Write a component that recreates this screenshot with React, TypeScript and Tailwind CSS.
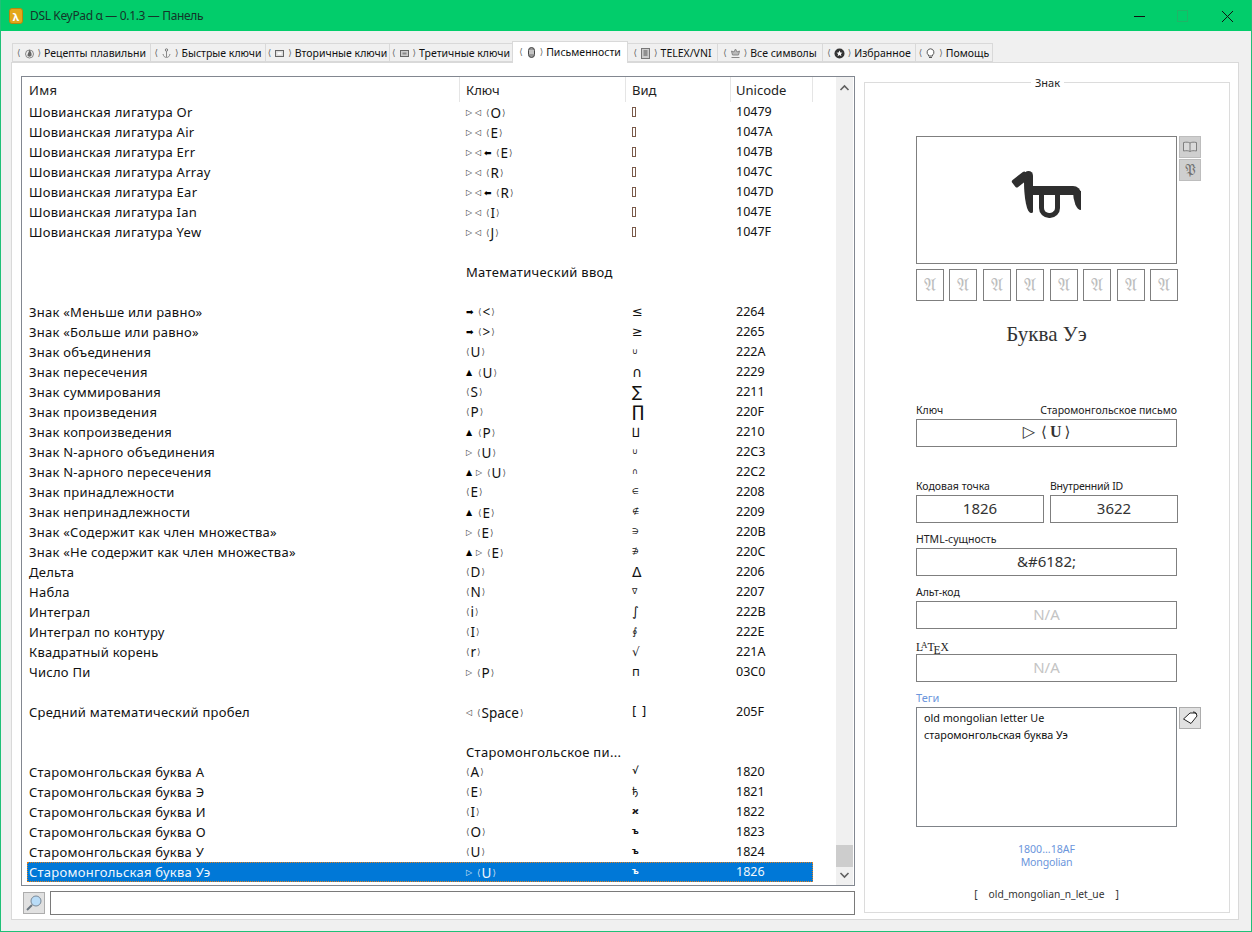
import React from "react";

const F = "font-['Noto_Sans',sans-serif]";
type Row = { n?: string; m?: string; k?: string; v?: React.ReactNode; u?: string; h?: string };
const Tofu = () => <span className="inline-block w-[4px] h-[10px] border border-[#7a5a4a] align-[-1px]" />;
const G = ({ c, s }: { c: string; s: string }) => <span className={s}>{c}</span>;

const tf = <Tofu />;
const rows: Row[] = [
  { n: "Шовианская лигатура Or", m: "rl", k: "O", v: tf, u: "10479" },
  { n: "Шовианская лигатура Air", m: "rl", k: "E", v: tf, u: "1047A" },
  { n: "Шовианская лигатура Err", m: "rlL", k: "E", v: tf, u: "1047B" },
  { n: "Шовианская лигатура Array", m: "rl", k: "R", v: tf, u: "1047C" },
  { n: "Шовианская лигатура Ear", m: "rlL", k: "R", v: tf, u: "1047D" },
  { n: "Шовианская лигатура Ian", m: "rl", k: "I", v: tf, u: "1047E" },
  { n: "Шовианская лигатура Yew", m: "rl", k: "J", v: tf, u: "1047F" },
  {},
  { h: "Математический ввод" },
  {},
  { n: "Знак «Меньше или равно»", m: "R", k: "<", v: <G c="≤" s="text-[13px]" />, u: "2264" },
  { n: "Знак «Больше или равно»", m: "R", k: ">", v: <G c="≥" s="text-[13px]" />, u: "2265" },
  { n: "Знак объединения", k: "U", v: <G c="∪" s="text-[8px]" />, u: "222A" },
  { n: "Знак пересечения", m: "u", k: "U", v: <G c="∩" s="text-[14px]" />, u: "2229" },
  { n: "Знак суммирования", k: "S", v: <G c="∑" s="text-[15px]" />, u: "2211" },
  { n: "Знак произведения", k: "P", v: <G c="∏" s="text-[16px]" />, u: "220F" },
  { n: "Знак копроизведения", m: "u", k: "P", v: <G c="∐" s="text-[10px]" />, u: "2210" },
  { n: "Знак N-арного объединения", m: "r", k: "U", v: <G c="∪" s="text-[8px]" />, u: "22C3" },
  { n: "Знак N-арного пересечения", m: "ur", k: "U", v: <G c="∩" s="text-[8px]" />, u: "22C2" },
  { n: "Знак принадлежности", k: "E", v: <G c="∈" s="text-[8px]" />, u: "2208" },
  { n: "Знак непринадлежности", m: "u", k: "E", v: <G c="∉" s="text-[8px]" />, u: "2209" },
  { n: "Знак «Содержит как член множества»", m: "r", k: "E", v: <G c="∋" s="text-[8px]" />, u: "220B" },
  { n: "Знак «Не содержит как член множества»", m: "ur", k: "E", v: <G c="∌" s="text-[8px]" />, u: "220C" },
  { n: "Дельта", k: "D", v: <G c="Δ" s="text-[14px]" />, u: "2206" },
  { n: "Набла", k: "N", v: <G c="∇" s="text-[8px]" />, u: "2207" },
  { n: "Интеграл", k: "i", v: <G c="∫" s="text-[13px]" />, u: "222B" },
  { n: "Интеграл по контуру", k: "I", v: <G c="∮" s="text-[10px]" />, u: "222E" },
  { n: "Квадратный корень", k: "r", v: <G c="√" s="text-[12px]" />, u: "221A" },
  { n: "Число Пи", m: "r", k: "P", v: <G c="п" s="text-[12px]" />, u: "03C0" },
  {},
  { n: "Средний математический пробел", m: "l", k: "Space", v: <G c="[ ]" s="text-[13px]" />, u: "205F" },
  {},
  { h: "Старомонгольское пи..." },
  { n: "Старомонгольская буква А", k: "A", v: <G c="√" s="text-[10px] font-bold -mt-[3px]" />, u: "1820" },
  { n: "Старомонгольская буква Э", k: "E", v: <G c="ђ" s="text-[10px]" />, u: "1821" },
  { n: "Старомонгольская буква И", k: "I", v: <G c="ϰ" s="text-[9px] font-bold -mt-[2px]" />, u: "1822" },
  { n: "Старомонгольская буква О", k: "O", v: <G c="ъ" s="text-[9px] font-bold -mt-[2px]" />, u: "1823" },
  { n: "Старомонгольская буква У", k: "U", v: <G c="ъ" s="text-[9px] font-bold -mt-[2px]" />, u: "1824" },
  { n: "Старомонгольская буква Уэ", m: "r", k: "U", v: <G c="ъ" s="text-[9px] font-bold -mt-[2px]" />, u: "1826" },
];

function Mod({ c, sel }: { c: string; sel?: boolean }) {
  const tone = sel ? "text-[#dfe9f5]" : "text-[#333]";
  const solid = sel ? "text-[#fff]" : "text-[#000]";
  if (c === "r") return <span className={`text-[8px] w-[8px] ${tone}`}>▷</span>;
  if (c === "l") return <span className={`text-[8px] w-[8px] ${tone}`}>◁</span>;
  if (c === "L") return <span className={`text-[9px] w-[9px] font-bold ${solid}`}>⬅</span>;
  if (c === "R") return <span className={`text-[9px] w-[9px] font-bold ${solid}`}>➡</span>;
  return <span className={`text-[8px] w-[9px] ${solid}`}>▲</span>;
}

function Key({ m, k, sel }: { m?: string; k?: string; sel?: boolean }) {
  if (!k) return null;
  const br = `font-['DejaVu_Sans',sans-serif] text-[9px] ${sel ? "text-[#cfe0f3]" : "text-[#555]"}`;
  return (
    <span className="inline-flex items-center">
      {m && (
        <span className="inline-flex items-center font-['DejaVu_Sans',sans-serif] gap-[1px] mr-[3px]">
          {m.split("").map((c, i) => (
            <Mod key={i} c={c} sel={sel} />
          ))}
        </span>
      )}
      <span className={br}>⟨</span>
      <span className="mx-[1px] text-[13.5px]">{k}</span>
      <span className={br}>⟩</span>
    </span>
  );
}

function ListRow({ r, sel }: { r: Row; sel?: boolean }) {
  return (
    <div
      className={`ml-[5px] w-[786px] h-[20px] grid grid-cols-[433px_166px_105px_82px] grid-rows-[20px] items-center leading-[20px] ${
        sel ? "bg-[#0078d7] text-[#f2f7fc] outline-1 -outline-offset-1 outline-dotted outline-[#e2801c]" : "text-[#111]"
      }`}
    >
      <div className="pl-[2px] mb-[1px] whitespace-nowrap text-[13px] tracking-[0.25px]">{r.n}</div>
      <div className={`pl-[6px] whitespace-nowrap ${r.h ? "text-[13px] tracking-[0.3px]" : "mb-[1px]"}`}>
        {r.h ? r.h : <Key m={r.m} k={r.k} sel={sel} />}
      </div>
      <div className="pl-[6px] flex items-center font-['DejaVu_Sans',sans-serif]">{r.v}</div>
      <div className="pl-[5px]">{r.u}</div>
    </div>
  );
}

const Ic = ({ children }: { children: React.ReactNode }) => (
  <svg width="11" height="11" viewBox="0 0 11 11" className="shrink-0">
    {children}
  </svg>
);

const tabs: { t: string; w: string; active?: boolean; icon: React.ReactNode }[] = [
  {
    t: "Рецепты плавильни",
    w: "w-[139px]",
    icon: (
      <Ic>
        <circle cx="5.5" cy="6" r="4" fill="none" stroke="#888" />
        <path d="M5.500 1.500C7 4 8 5.500 7.500 7.500 7 9 4 9 3.500 7.500 3.300 6 4.500 5 5.500 1.500Z" fill="#666" />
      </Ic>
    ),
  },
  {
    t: "Быстрые ключи",
    w: "w-[116px]",
    icon: (
      <Ic>
        <circle cx="5.5" cy="2" r="1.2" fill="none" stroke="#777" />
        <path d="M5.500 3v6M2 6c.5 2.500 2 3.500 3.500 3.500S8.500 8.500 9 6" fill="none" stroke="#888" />
      </Ic>
    ),
  },
  {
    t: "Вторичные ключи",
    w: "w-[125px]",
    icon: (
      <Ic>
        <rect x="1.500" y="2.500" width="8" height="6" fill="#ddd" stroke="#666" />
        <rect x="3.500" y="4.500" width="4" height="2" fill="#fff" />
      </Ic>
    ),
  },
  {
    t: "Третичные ключи",
    w: "w-[124px]",
    icon: (
      <Ic>
        <rect x="1.500" y="2.500" width="8" height="6" fill="#ccc" stroke="#666" />
        <rect x="3.500" y="4.500" width="4" height="2" fill="#888" />
      </Ic>
    ),
  },
  {
    t: "Письменности",
    w: "w-[116px]",
    active: true,
    icon: (
      <Ic>
        <rect x="2.500" y="0.500" width="6" height="10" rx="3" fill="#999" stroke="#444" />
        <path d="M3 4h5M3 6h5" stroke="#eee" />
      </Ic>
    ),
  },
  {
    t: "TELEX/VNI",
    w: "w-[91px]",
    icon: (
      <Ic>
        <rect x="1.500" y="0.500" width="8" height="10" fill="#ccc" stroke="#777" />
        <path d="M3.500 3h4M3.500 5h4M3.500 7h4" stroke="#555" />
      </Ic>
    ),
  },
  {
    t: "Все символы",
    w: "w-[106px]",
    icon: (
      <Ic>
        <path d="M5.500 1 7 4l2.500-1L8.500 7h-6L1.500 3 4 4Z" fill="#bbb" stroke="#888" />
        <path d="M1.500 9.500h8" stroke="#888" />
      </Ic>
    ),
  },
  {
    t: "Избранное",
    w: "w-[94px]",
    icon: (
      <Ic>
        <circle cx="5.500" cy="5.500" r="5" fill="#333" />
        <path d="m5.500 2.500.9 2 2.100.2-1.600 1.400.5 2.100-1.900-1.100-1.900 1.100.5-2.100L2.500 4.700l2.100-.2Z" fill="#fff" />
      </Ic>
    ),
  },
  {
    t: "Помощь",
    w: "w-[78px]",
    icon: (
      <Ic>
        <path d="M5.500.8a3.500 3.500 0 0 0-2 6.300V8h4v-.9a3.500 3.500 0 0 0-2-6.300Z" fill="#fff" stroke="#555" />
        <path d="M4 9.500h3" stroke="#555" />
      </Ic>
    ),
  },
];

function Tab({ t, w, active, icon }: (typeof tabs)[number]) {
  return (
    <div
      className={`${w} flex items-center justify-center whitespace-nowrap border border-[#d9d9d9] text-[10.5px] text-[#111] -mr-px ${
        active ? "h-[22px] bg-white border-b-0 relative z-10 -mb-px" : "h-[19px] pt-[2px] bg-[#f0f0f0]"
      }`}
    >
      <span className="text-[#666] mr-[3px] font-['DejaVu_Sans',sans-serif] text-[9px]">⟨</span>
      {icon}
      <span className="text-[#666] ml-[3px] mr-[3px] font-['DejaVu_Sans',sans-serif] text-[9px]">⟩</span>
      {t}
    </div>
  );
}

function Box({ children, muted, big }: { children?: React.ReactNode; muted?: boolean; big?: boolean }) {
  return (
    <div
      className={`h-[28px] border border-[#7f7f7f] flex items-center justify-center pb-[2px] ${big ? "" : "text-[15px]"} ${
        muted ? "text-[#c4c4c4]" : "text-[#333]"
      }`}
    >
      {children}
    </div>
  );
}

function BigGlyph() {
  return (
    <div className="relative w-[70px] h-[48px] mb-[10px]">
      <div className="absolute left-[14px] top-[15px] w-[55px] h-[9px] bg-[#2e2e2e] rounded-tr-[8px]" />
      <div className="absolute left-[61px] top-[20px] w-[8px] h-[19px] bg-[#2e2e2e] rounded-bl-[100%]" />
      <div className="absolute left-[12px] top-[0px] w-[9px] h-[42px] bg-[#2e2e2e] rounded-t-[6px] rounded-bl-[100%] rounded-br-[2px]" />
      <div className="absolute left-[0px] top-[4px] w-[17px] h-[9px] bg-[#2e2e2e] rounded-[2px] rotate-[-38deg]" />
      <div className="absolute left-[27px] top-[22px] w-[21px] h-[25px] border-[5px] border-t-0 border-[#2e2e2e] rounded-b-[10px]" />
    </div>
  );
}

const Frak = ({ c, s }: { c: string; s: string }) => (
  <span className={`font-['DejaVu_Serif','DejaVu_Sans',serif] ${s}`}>{c}</span>
);

export default function App() {
  return (
    <div className={`${F} w-[1252px] h-[932px] border border-[#1fc077] border-t-0 bg-[#f0f0f0] flex flex-col overflow-hidden`}>
      <div className="h-[31px] shrink-0 -mx-px bg-[#02cd6b] flex items-center pl-[9px]">
        <div className="mt-[1px] w-[14px] h-[16px] rounded-[3px] bg-[#e3a71c] border border-[#b8860b] flex items-center justify-center text-white text-[11px] font-bold leading-none">
          λ
        </div>
        <div className="ml-[7px] mt-[1px] text-[12px] text-[#14352a] tracking-[-0.35px]">DSL KeyPad α — 0.1.3 — Панель</div>
        <div className="ml-auto flex items-center">
          <svg width="118" height="14" viewBox="0 0 118 14">
            <path d="M0 7.500h11" stroke="#111" />
            <rect x="43.500" y="1.500" width="10" height="11" fill="none" stroke="#1fb567" />
            <path d="m88 2 11 11M99 2 88 13" stroke="#111" />
          </svg>
        </div>
      </div>

      <div className="flex-1 flex flex-col pl-[10px] pr-[12px]">
        <div className="h-[21px] mt-[10px] pl-[1px] flex items-end">
          {tabs.map((t) => (
            <Tab key={t.t} {...t} />
          ))}
        </div>
        <div className="h-[858px] bg-white border border-[#d9d9d9] flex pl-[9px] pt-[13px]">
          <div className="w-[834px] shrink-0 flex flex-col">
            <div className="h-[810px] border border-[#828790] flex text-[12.5px] bg-white">
              <div className="w-[814px] flex flex-col">
                <div className="h-[25px] grid grid-cols-[438px_166px_105px_82px] items-center text-[#222] text-[13px]">
                  <div className="pl-[7px] pt-[3px] h-full flex items-center border-r border-[#e5e5e5] tracking-[0.3px]">Имя</div>
                  <div className="pl-[6px] pt-[3px] h-full flex items-center border-r border-[#e5e5e5]">Ключ</div>
                  <div className="pl-[6px] pt-[3px] h-full flex items-center border-r border-[#e5e5e5]">Вид</div>
                  <div className="pl-[5px] pt-[3px] h-full flex items-center border-r border-[#e5e5e5]">Unicode</div>
                </div>
                {rows.map((r, i) => (
                  <ListRow key={i} r={r} sel={i === rows.length - 1} />
                ))}
              </div>
              <div className="ml-auto w-[17px] mr-[1px] bg-[#f0f0f0] flex flex-col items-center">
                <svg width="11" height="8" viewBox="0 0 11 8" className="mt-[7px]">
                  <path d="m1.500 6 4-4 4 4" fill="none" stroke="#606060" strokeWidth="1.600" />
                </svg>
                <div className="mt-auto w-full h-[22px] bg-[#cdcdcd]" />
                <svg width="11" height="8" viewBox="0 0 11 8" className="mt-[4px] mb-[6px]">
                  <path d="m1.500 2 4 4 4-4" fill="none" stroke="#606060" strokeWidth="1.600" />
                </svg>
              </div>
            </div>
            <div className="mt-[5px] flex items-center gap-[5px] h-[24px]">
              <div className="ml-[2px] w-[22px] h-[22px] bg-[#e1e1e1] border border-[#adadad] flex items-center justify-center">
                <svg width="18" height="18" viewBox="0 0 18 18">
                  <circle cx="11" cy="7" r="5" fill="#b9dcf7" stroke="#7a8a99" />
                  <path d="m7 11-5 5" stroke="#6b7680" strokeWidth="2" />
                </svg>
              </div>
              <div className="flex-1 h-[24px] bg-white border border-[#7a7a7a]" />
            </div>
          </div>

          <div className="ml-[9px] mt-[6px] w-[366px] h-[831px] border border-[#dcdcdc] relative pl-[51px] pt-[53px] text-[10.5px] text-[#222]">
            <div className="absolute left-[166px] -top-[7px] px-[4px] bg-white text-[11px] leading-[14px] text-[#222]">Знак</div>

            <div className="flex gap-[2px]">
              <div className="w-[261px] h-[128px] border border-[#7f7f7f] flex items-center justify-center">
                <BigGlyph />
              </div>
              <div className="flex flex-col gap-[1px]">
                <div className="w-[22px] h-[22px] bg-[#cfcfcf] border border-[#bdbdbd] flex items-center justify-center">
                  <svg width="16" height="14" viewBox="0 0 16 14">
                    <path d="M8 3C6.500 2 4 2 1.500 2.500v8.500C4 10.500 6.500 10.500 8 11.500 9.500 10.500 12 10.500 14.500 11V2.500C12 2 9.500 2 8 3Zm0 0v8.500" fill="#dadada" stroke="#7f7f7f" />
                  </svg>
                </div>
                <div className="w-[22px] h-[22px] bg-[#cfcfcf] border border-[#bdbdbd] flex items-center justify-center text-[#707070]">
                  <Frak c="𝔓" s="text-[15px] leading-none" />
                </div>
              </div>
            </div>

            <div className="mt-[5px] w-[262px] flex justify-between">
              {[0, 1, 2, 3, 4, 5, 6, 7].map((i) => (
                <div key={i} className="w-[28px] h-[32px] border border-[#7f7f7f] flex items-center justify-center text-[#bdbdbd]">
                  <Frak c="𝔄" s="text-[18px] leading-none" />
                </div>
              ))}
            </div>

            <div className="mt-[18px] w-[261px] h-[30px] text-center font-['Liberation_Serif',serif] text-[21px] leading-[30px] text-[#333]">
              Буква Уэ
            </div>

            <div className="mt-[53px] w-[261px] h-[16px] mb-px flex justify-between items-center leading-[16px]">
              <span>Ключ</span>
              <span>Старомонгольское письмо</span>
            </div>
            <div className="w-[261px]">
              <Box big>
                <span className="font-['DejaVu_Serif',serif] text-[#333] flex items-center gap-[3px]">
                  <span className="text-[16px] mr-[3px]">▷</span>
                  <span className="text-[15px]">⟨</span>
                  <span className="text-[16px] font-['Liberation_Serif',serif] font-bold">U</span>
                  <span className="text-[15px]">⟩</span>
                </span>
              </Box>
            </div>

            <div className="mt-[31px] flex gap-[6px] w-[262px]">
              <div className="w-[128px]">
                <div className="h-[16px] mb-px leading-[16px]">Кодовая точка</div>
                <Box>1826</Box>
              </div>
              <div className="w-[128px]">
                <div className="h-[16px] mb-px leading-[16px] tracking-[-0.2px]">Внутренний ID</div>
                <Box>3622</Box>
              </div>
            </div>

            <div className="w-[261px]">
              <div className="mt-[8px] h-[16px] mb-px leading-[16px]">HTML-сущность</div>
              <Box>&amp;#6182;</Box>
              <div className="mt-[8px] h-[16px] mb-px leading-[16px]">Альт-код</div>
              <Box muted>N/A</Box>
              <div className="mt-[8px] h-[16px] mb-px leading-[16px] font-['Liberation_Serif',serif] text-[11.5px]">
                L<span className="text-[9px] align-[3px] -ml-[2px]">A</span>T<span className="align-[-3px] -ml-[1px]">E</span>X
              </div>
              <Box muted>N/A</Box>
              <div className="mt-[8px] h-[16px] mb-px leading-[16px] text-[#6c96dc] text-[11px]">Теги</div>
            </div>
            <div className="flex gap-[2px]">
              <div className="w-[261px] h-[120px] border border-[#7f8388] pl-[7px] pt-[1px] text-[10.8px] leading-[17px] text-[#111]">
                <div>old mongolian letter Ue</div>
                <div>старомонгольская буква Уэ</div>
              </div>
              <div className="w-[22px] h-[22px] bg-[#e1e1e1] border border-[#adadad] flex items-center justify-center">
                <svg width="16" height="14" viewBox="0 0 16 14">
                  <path d="M1.500 8 8 2h6l1 3-6 7.500Z" fill="#fff" stroke="#222" />
                  <path d="M11 1c1.500 0 3 .5 3 2" fill="none" stroke="#222" />
                </svg>
              </div>
            </div>

            <div className="mt-[16px] w-[261px] text-center text-[10.6px] leading-[13px] text-[#6c96dc]">
              <div>1800...18AF</div>
              <div className="tracking-[-0.2px]">Mongolian</div>
            </div>
            <div className="mt-[18px] w-[261px] flex justify-center items-center gap-[11px] text-[10.25px] leading-[14px] text-[#333]">
              <span>[</span>
              <span>old_mongolian_n_let_ue</span>
              <span>]</span>
            </div>
          </div>
        </div>
      </div>
    </div>
  );
}
